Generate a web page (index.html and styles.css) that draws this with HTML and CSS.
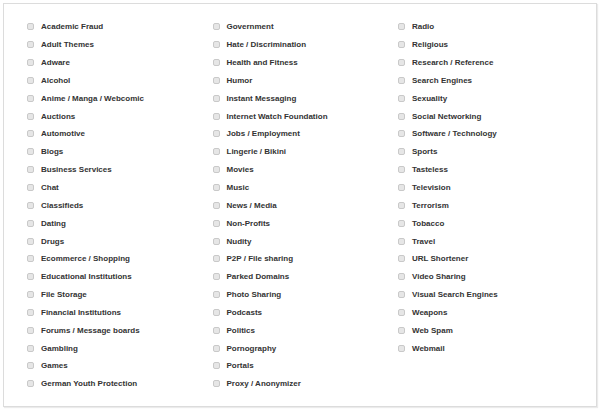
FILE: index.html
```html
<!DOCTYPE html>
<html>
<head>
<meta charset="utf-8">
<link rel="stylesheet" href="styles.css">
</head>
<body>
<div class="panel">
  <div class="cols">
    <ul class="col">
      <li><input type="checkbox" class="cb"><span>Academic Fraud</span></li>
      <li><input type="checkbox" class="cb"><span>Adult Themes</span></li>
      <li><input type="checkbox" class="cb"><span>Adware</span></li>
      <li><input type="checkbox" class="cb"><span>Alcohol</span></li>
      <li><input type="checkbox" class="cb"><span>Anime / Manga / Webcomic</span></li>
      <li><input type="checkbox" class="cb"><span>Auctions</span></li>
      <li><input type="checkbox" class="cb"><span>Automotive</span></li>
      <li><input type="checkbox" class="cb"><span>Blogs</span></li>
      <li><input type="checkbox" class="cb"><span>Business Services</span></li>
      <li><input type="checkbox" class="cb"><span>Chat</span></li>
      <li><input type="checkbox" class="cb"><span>Classifieds</span></li>
      <li><input type="checkbox" class="cb"><span>Dating</span></li>
      <li><input type="checkbox" class="cb"><span>Drugs</span></li>
      <li><input type="checkbox" class="cb"><span>Ecommerce / Shopping</span></li>
      <li><input type="checkbox" class="cb"><span>Educational Institutions</span></li>
      <li><input type="checkbox" class="cb"><span>File Storage</span></li>
      <li><input type="checkbox" class="cb"><span>Financial Institutions</span></li>
      <li><input type="checkbox" class="cb"><span>Forums / Message boards</span></li>
      <li><input type="checkbox" class="cb"><span>Gambling</span></li>
      <li><input type="checkbox" class="cb"><span>Games</span></li>
      <li><input type="checkbox" class="cb"><span>German Youth Protection</span></li>
    </ul>
    <ul class="col">
      <li><input type="checkbox" class="cb"><span>Government</span></li>
      <li><input type="checkbox" class="cb"><span>Hate / Discrimination</span></li>
      <li><input type="checkbox" class="cb"><span>Health and Fitness</span></li>
      <li><input type="checkbox" class="cb"><span>Humor</span></li>
      <li><input type="checkbox" class="cb"><span>Instant Messaging</span></li>
      <li><input type="checkbox" class="cb"><span>Internet Watch Foundation</span></li>
      <li><input type="checkbox" class="cb"><span>Jobs / Employment</span></li>
      <li><input type="checkbox" class="cb"><span>Lingerie / Bikini</span></li>
      <li><input type="checkbox" class="cb"><span>Movies</span></li>
      <li><input type="checkbox" class="cb"><span>Music</span></li>
      <li><input type="checkbox" class="cb"><span>News / Media</span></li>
      <li><input type="checkbox" class="cb"><span>Non-Profits</span></li>
      <li><input type="checkbox" class="cb"><span>Nudity</span></li>
      <li><input type="checkbox" class="cb"><span>P2P / File sharing</span></li>
      <li><input type="checkbox" class="cb"><span>Parked Domains</span></li>
      <li><input type="checkbox" class="cb"><span>Photo Sharing</span></li>
      <li><input type="checkbox" class="cb"><span>Podcasts</span></li>
      <li><input type="checkbox" class="cb"><span>Politics</span></li>
      <li><input type="checkbox" class="cb"><span>Pornography</span></li>
      <li><input type="checkbox" class="cb"><span>Portals</span></li>
      <li><input type="checkbox" class="cb"><span>Proxy / Anonymizer</span></li>
    </ul>
    <ul class="col">
      <li><input type="checkbox" class="cb"><span>Radio</span></li>
      <li><input type="checkbox" class="cb"><span>Religious</span></li>
      <li><input type="checkbox" class="cb"><span>Research / Reference</span></li>
      <li><input type="checkbox" class="cb"><span>Search Engines</span></li>
      <li><input type="checkbox" class="cb"><span>Sexuality</span></li>
      <li><input type="checkbox" class="cb"><span>Social Networking</span></li>
      <li><input type="checkbox" class="cb"><span>Software / Technology</span></li>
      <li><input type="checkbox" class="cb"><span>Sports</span></li>
      <li><input type="checkbox" class="cb"><span>Tasteless</span></li>
      <li><input type="checkbox" class="cb"><span>Television</span></li>
      <li><input type="checkbox" class="cb"><span>Terrorism</span></li>
      <li><input type="checkbox" class="cb"><span>Tobacco</span></li>
      <li><input type="checkbox" class="cb"><span>Travel</span></li>
      <li><input type="checkbox" class="cb"><span>URL Shortener</span></li>
      <li><input type="checkbox" class="cb"><span>Video Sharing</span></li>
      <li><input type="checkbox" class="cb"><span>Visual Search Engines</span></li>
      <li><input type="checkbox" class="cb"><span>Weapons</span></li>
      <li><input type="checkbox" class="cb"><span>Web Spam</span></li>
      <li><input type="checkbox" class="cb"><span>Webmail</span></li>
    </ul>
  </div>
</div>
</body>
</html>
```
FILE: styles.css
```css
html, body {
  margin: 0;
  padding: 0;
  background: #fff;
}
body {
  padding: 3px;
  font-family: "Liberation Sans", Arial, sans-serif;
}
.panel {
  box-sizing: border-box;
  width: 594px;
  height: 404px;
  border: 1px solid #dcdcdc;
  box-shadow: 1px 1px 1px rgba(0, 0, 0, 0.08);
  background: #fff;
  padding: 14px 0 0 23px;
}
.cols {
  display: flex;
}
.col {
  list-style: none;
  margin: 0;
  padding: 0;
  width: 185.5px;
}
.col li {
  display: flex;
  align-items: center;
  height: 17.85px;
  font-size: 8px;
  font-weight: bold;
  color: #333;
  white-space: nowrap;
}
.cb {
  appearance: none;
  -webkit-appearance: none;
  box-sizing: border-box;
  width: 7px;
  height: 7px;
  margin: 0 7px 0 0;
  border: 1px solid #c9c9c9;
  border-radius: 2px;
  background: #e6e6e6;
  flex: none;
}
```
